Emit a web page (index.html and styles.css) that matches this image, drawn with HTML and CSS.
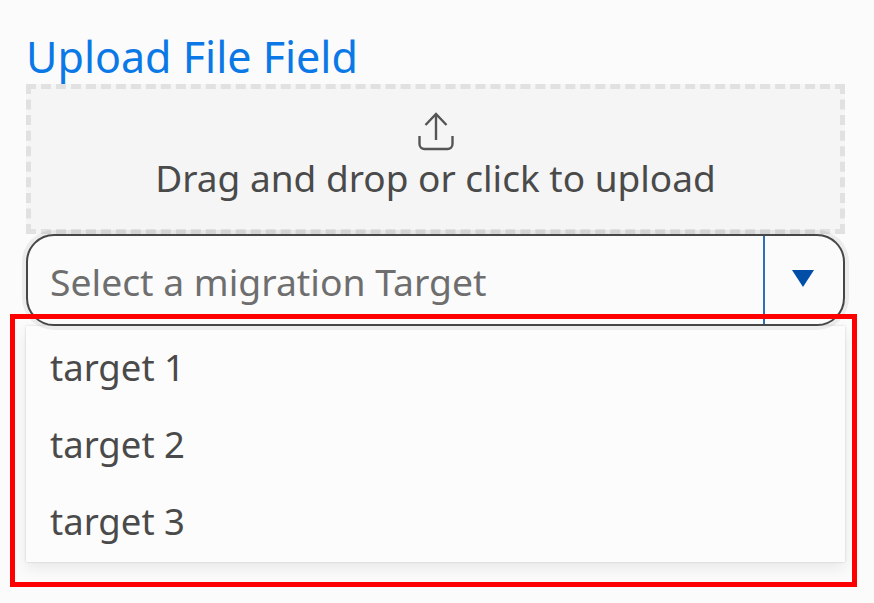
FILE: index.html
```
<!DOCTYPE html>
<html lang="en">
<head>
<meta charset="utf-8">
<title>Upload File Field</title>
<link rel="stylesheet" href="styles.css">
</head>
<body>
<main class="form">
  <h1 class="title">Upload File Field</h1>
  <div class="dropzone">
    <svg class="upload-icon" viewBox="0 0 36 40" width="36" height="40" aria-hidden="true">
      <path d="M18 29V3M7.500 14 18 3l10.500 11M1.500 25v8a5 5 0 0 0 5 5h23a5 5 0 0 0 5-5v-8" fill="none" stroke="#555" stroke-width="2.400"/>
    </svg>
    <div class="drop-text">Drag and drop or click to upload</div>
  </div>
  <div class="select">
    <div class="select-value">Select a migration Target</div>
    <div class="select-toggle"><span class="caret"></span></div>
  </div>
  <ul class="menu">
    <li class="menu-item">target 1</li>
    <li class="menu-item">target 2</li>
    <li class="menu-item">target 3</li>
  </ul>
</main>
<div class="highlight"></div>
</body>
</html>
```
FILE: styles.css
```
* { box-sizing: border-box; }
html, body { margin: 0; height: 100%; }
body {
  background: #fbfbfb;
  font-family: "Noto Sans", sans-serif;
  color: #4a4a4a;
  overflow: hidden;
  position: relative;
}
.form { padding: 29px 29px 0 26px; }
.title {
  margin: 0;
  height: 55px;
  font-size: 43px;
  line-height: 56px;
  font-weight: 400;
  color: #0a78e6;
}
.dropzone {
  height: 150px;
  border: 5px dashed #e1e1e1;
  background: #f5f5f5;
  display: flex;
  flex-direction: column;
  align-items: center;
  padding-top: 22px;
}
.upload-icon { display: block; }
.drop-text { font-size: 37px; line-height: 37px; margin-top: 8px; }
.select {
  height: 92px;
  display: flex;
  border: 2px solid #474747;
  border-radius: 28px;
  background: #fbfbfb;
  box-shadow: 0 0 0 4px rgba(0, 0, 0, 0.06);
  position: relative;
  z-index: 1;
}
.select-value {
  flex: 1;
  padding-left: 22px;
  font-size: 37.300px;
  line-height: 92px;
  color: #6e6e6e;
}
.select-toggle {
  width: 80px;
  border-left: 2px solid #2f6fb5;
  display: flex;
  align-items: center;
  justify-content: center;
}
.caret {
  width: 0;
  height: 0;
  border-left: 11px solid transparent;
  border-right: 11px solid transparent;
  border-top: 17px solid #004ea8;
  margin: -4px 2px 0 0;
}
.menu {
  list-style: none;
  margin: 0;
  padding: 3px 0 0;
  height: 236px;
  background: #fcfcfc;
  box-shadow: 0 6px 14px rgba(0, 0, 0, 0.08), 0 0 2px rgba(0, 0, 0, 0.16);
  position: relative;
}
.menu-item {
  height: 77px;
  padding-left: 24px;
  font-size: 36.500px;
  line-height: 76px;
}
.highlight {
  position: absolute;
  left: 10px;
  top: 314px;
  width: 847px;
  height: 273px;
  border: 5px solid #fe0000;
  pointer-events: none;
  z-index: 2;
}
```
